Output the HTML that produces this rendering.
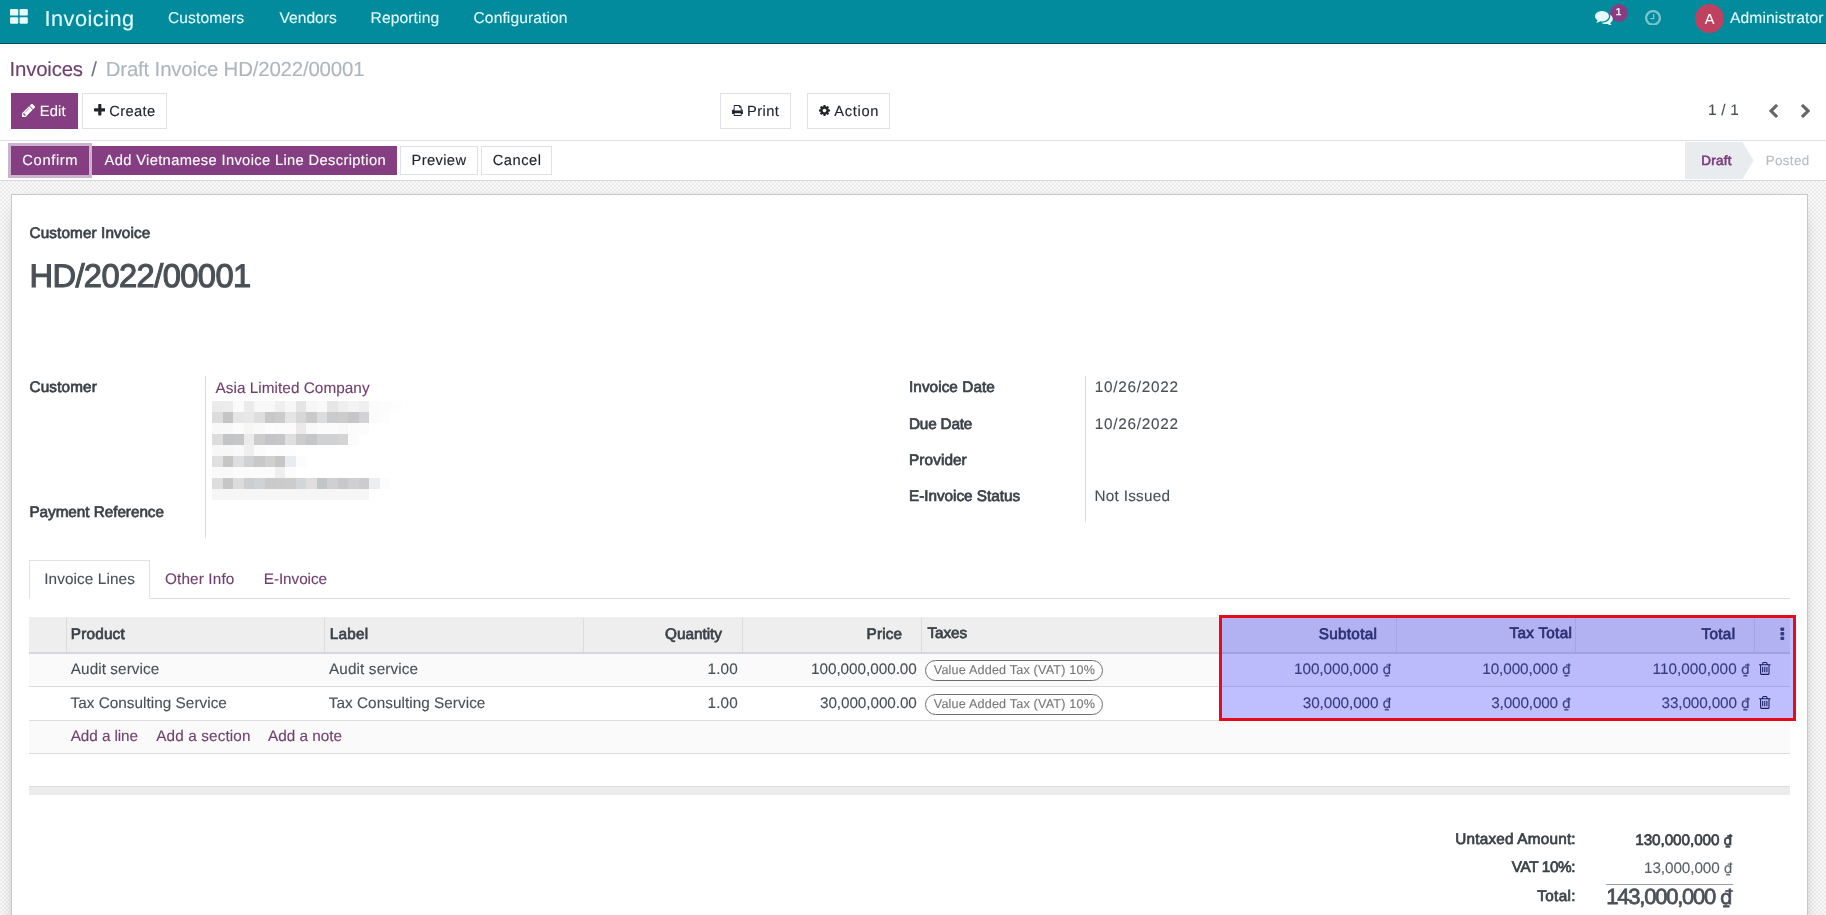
<!DOCTYPE html>
<html lang="en">
<head>
<meta charset="utf-8">
<title>Invoices / Draft Invoice HD/2022/00001</title>
<style>
html,body{margin:0;padding:0;}
body{width:1826px;height:915px;overflow:hidden;background:#fff;font-family:"Liberation Sans",sans-serif;text-rendering:geometricPrecision;}
#page{position:relative;width:1826px;height:915px;overflow:hidden;will-change:transform;}
#page div,#page span,#page svg{position:absolute;box-sizing:border-box;}
.t{white-space:nowrap;}
#page .t .d{position:static;font-family:"DejaVu Sans","Liberation Sans",sans-serif;font-size:0.9em;}
.navbar{left:0;top:0;width:1826px;height:44px;background:#018b9c;border-bottom:1px solid #04505f;}
.hatch{left:0;top:181px;width:1826px;height:734px;background-color:#f8f8f8;
 background-image:linear-gradient(45deg,#ececec 25%,transparent 25%,transparent 75%,#ececec 75%),linear-gradient(45deg,#ececec 25%,transparent 25%,transparent 75%,#ececec 75%);
 background-size:4px 4px;background-position:0 0,2px 2px;}
.sheet{left:11px;top:194px;width:1797px;height:760px;background:#fff;border:1px solid #c8c8cc;box-shadow:0 5px 20px -15px #000;}
.hl{height:1px;background:#dcdcdc;}
.vl{width:1px;background:#dddddd;}
.btn{border:1px solid #dee2e6;background:#fff;}
.btnp{background:#863e83;}
.badge{border:1px solid #6f6f6f;border-radius:11px;background:#fff;}
</style>
</head>
<body>
<div id="page">
<!-- top navigation bar -->
<div class="navbar"></div>
<svg style="left:10px;top:9px" width="18" height="15" viewBox="0 0 18 15"><g fill="#e9fcfd"><rect x="0" y="0" width="8.2" height="6.6" rx="1.2"/><rect x="9.6" y="0" width="8.2" height="6.6" rx="1.2"/><rect x="0" y="8.2" width="8.2" height="6.6" rx="1.2"/><rect x="9.6" y="8.2" width="8.2" height="6.6" rx="1.2"/></g></svg>
<!-- messaging badge -->
<div style="left:1609.5px;top:4px;width:18px;height:18px;border-radius:9px;background:#863e83"></div>
<!-- avatar -->
<div style="left:1695px;top:4px;width:29px;height:29px;border-radius:15px;background:#bf4160"></div>

<!-- control panel -->
<div class="btnp" style="left:11px;top:93px;width:67px;height:36px"></div>
<div class="btn" style="left:82px;top:93px;width:85px;height:36px"></div>
<div class="btn" style="left:720px;top:93px;width:71px;height:36px"></div>
<div class="btn" style="left:807px;top:93px;width:83px;height:36px"></div>
<div class="hl" style="left:0;top:140px;width:1826px;background:#dfdfdf"></div>

<!-- status bar -->
<div style="left:8px;top:143px;width:84px;height:35px;background:#cbb2cd"></div>
<div class="btnp" style="left:11px;top:146px;width:78px;height:29px"></div>
<div class="btnp" style="left:92px;top:146px;width:305px;height:29px"></div>
<div class="btn" style="left:400px;top:146px;width:78px;height:29px"></div>
<div class="btn" style="left:481px;top:146px;width:71px;height:29px"></div>
<svg style="left:1685px;top:142px" width="70" height="37" viewBox="0 0 70 37"><path d="M0 0H57.500L68.600 18.500L57.500 37H0z" fill="#e9ecef"/></svg>
<div class="hl" style="left:0;top:180px;width:1826px;background:#d5d8db"></div>

<!-- form background + sheet -->
<div class="hatch"></div>
<div class="sheet"></div>

<!-- group separators -->
<div class="vl" style="left:205px;top:376px;height:162px"></div>
<div class="vl" style="left:1085px;top:376px;height:146px"></div>

<!-- blurred partner address (pixelated in source) -->
<svg style="left:212px;top:401px" width="190" height="100" viewBox="212 401 190 100" shape-rendering="crispEdges">
<rect x="212.20" y="401.00" width="10.52" height="11.00" fill="#ebebeb"/>
<rect x="222.67" y="401.00" width="10.52" height="11.00" fill="#ececec"/>
<rect x="233.14" y="401.00" width="10.52" height="11.00" fill="#fbfbfb"/>
<rect x="243.61" y="401.00" width="10.52" height="11.00" fill="#ebebeb"/>
<rect x="254.08" y="401.00" width="10.52" height="11.00" fill="#f8f8f8"/>
<rect x="264.55" y="401.00" width="10.52" height="11.00" fill="#f8f8f8"/>
<rect x="275.02" y="401.00" width="10.52" height="11.00" fill="#efefef"/>
<rect x="285.49" y="401.00" width="10.52" height="11.00" fill="#f7f7f7"/>
<rect x="295.96" y="401.00" width="10.52" height="11.00" fill="#e4e4e4"/>
<rect x="306.43" y="401.00" width="10.52" height="11.00" fill="#f6f6f6"/>
<rect x="316.90" y="401.00" width="10.52" height="11.00" fill="#f9f9f9"/>
<rect x="327.37" y="401.00" width="10.52" height="11.00" fill="#e6e6e6"/>
<rect x="337.84" y="401.00" width="10.52" height="11.00" fill="#efefef"/>
<rect x="348.31" y="401.00" width="10.52" height="11.00" fill="#f3f3f3"/>
<rect x="358.78" y="401.00" width="10.52" height="11.00" fill="#efefef"/>
<rect x="369.25" y="401.00" width="10.52" height="11.00" fill="#fbfbfb"/>
<rect x="379.72" y="401.00" width="10.52" height="11.00" fill="#fcfcfc"/>
<rect x="390.19" y="401.00" width="10.52" height="11.00" fill="#fdfdfd"/>
<rect x="212.20" y="411.95" width="10.52" height="11.00" fill="#dcdcdc"/>
<rect x="222.67" y="411.95" width="10.52" height="11.00" fill="#c4c4c4"/>
<rect x="233.14" y="411.95" width="10.52" height="11.00" fill="#e6e6e6"/>
<rect x="243.61" y="411.95" width="10.52" height="11.00" fill="#e8e8e8"/>
<rect x="254.08" y="411.95" width="10.52" height="11.00" fill="#dedede"/>
<rect x="264.55" y="411.95" width="10.52" height="11.00" fill="#c8c8c8"/>
<rect x="275.02" y="411.95" width="10.52" height="11.00" fill="#cbcbcb"/>
<rect x="285.49" y="411.95" width="10.52" height="11.00" fill="#e4e4e4"/>
<rect x="295.96" y="411.95" width="10.52" height="11.00" fill="#d6d8d8"/>
<rect x="306.43" y="411.95" width="10.52" height="11.00" fill="#cacaca"/>
<rect x="316.90" y="411.95" width="10.52" height="11.00" fill="#dadcde"/>
<rect x="327.37" y="411.95" width="10.52" height="11.00" fill="#cacaca"/>
<rect x="337.84" y="411.95" width="10.52" height="11.00" fill="#cccccc"/>
<rect x="348.31" y="411.95" width="10.52" height="11.00" fill="#c6c6c8"/>
<rect x="358.78" y="411.95" width="10.52" height="11.00" fill="#d2d2d4"/>
<rect x="369.25" y="411.95" width="10.52" height="11.00" fill="#fbfbfb"/>
<rect x="379.72" y="411.95" width="10.52" height="11.00" fill="#fdfdfd"/>
<rect x="212.20" y="422.90" width="10.52" height="11.00" fill="#f8f8f8"/>
<rect x="222.67" y="422.90" width="10.52" height="11.00" fill="#f8f8f8"/>
<rect x="233.14" y="422.90" width="10.52" height="11.00" fill="#fcfcfc"/>
<rect x="243.61" y="422.90" width="10.52" height="11.00" fill="#f6f6f4"/>
<rect x="254.08" y="422.90" width="10.52" height="11.00" fill="#f9f9f9"/>
<rect x="264.55" y="422.90" width="10.52" height="11.00" fill="#fdfdfd"/>
<rect x="275.02" y="422.90" width="10.52" height="11.00" fill="#fbfbfb"/>
<rect x="285.49" y="422.90" width="10.52" height="11.00" fill="#fbfbfb"/>
<rect x="295.96" y="422.90" width="10.52" height="11.00" fill="#ebe9e9"/>
<rect x="306.43" y="422.90" width="10.52" height="11.00" fill="#f9f9f9"/>
<rect x="316.90" y="422.90" width="10.52" height="11.00" fill="#fbfbfb"/>
<rect x="327.37" y="422.90" width="10.52" height="11.00" fill="#fbfbfb"/>
<rect x="337.84" y="422.90" width="10.52" height="11.00" fill="#f9f9f9"/>
<rect x="348.31" y="422.90" width="10.52" height="11.00" fill="#fcfcfc"/>
<rect x="358.78" y="422.90" width="10.52" height="11.00" fill="#fcfcfc"/>
<rect x="212.20" y="433.85" width="10.52" height="11.00" fill="#dcdcdc"/>
<rect x="222.67" y="433.85" width="10.52" height="11.00" fill="#c2c4c6"/>
<rect x="233.14" y="433.85" width="10.52" height="11.00" fill="#c4c6c8"/>
<rect x="243.61" y="433.85" width="10.52" height="11.00" fill="#ebebeb"/>
<rect x="254.08" y="433.85" width="10.52" height="11.00" fill="#cccccc"/>
<rect x="264.55" y="433.85" width="10.52" height="11.00" fill="#c4c4c8"/>
<rect x="275.02" y="433.85" width="10.52" height="11.00" fill="#c6c6c8"/>
<rect x="285.49" y="433.85" width="10.52" height="11.00" fill="#dee0e0"/>
<rect x="295.96" y="433.85" width="10.52" height="11.00" fill="#cccccc"/>
<rect x="306.43" y="433.85" width="10.52" height="11.00" fill="#c4c6c8"/>
<rect x="316.90" y="433.85" width="10.52" height="11.00" fill="#cfd1d3"/>
<rect x="327.37" y="433.85" width="10.52" height="11.00" fill="#cfd1d3"/>
<rect x="337.84" y="433.85" width="10.52" height="11.00" fill="#d4d4d4"/>
<rect x="348.31" y="433.85" width="10.52" height="11.00" fill="#fcfcfc"/>
<rect x="212.20" y="444.80" width="10.52" height="11.00" fill="#f7f7f7"/>
<rect x="222.67" y="444.80" width="10.52" height="11.00" fill="#f7f7f7"/>
<rect x="233.14" y="444.80" width="10.52" height="11.00" fill="#f9f9f9"/>
<rect x="243.61" y="444.80" width="10.52" height="11.00" fill="#efefef"/>
<rect x="254.08" y="444.80" width="10.52" height="11.00" fill="#fbfbfb"/>
<rect x="264.55" y="444.80" width="10.52" height="11.00" fill="#fdfdfd"/>
<rect x="275.02" y="444.80" width="10.52" height="11.00" fill="#fcfcfc"/>
<rect x="285.49" y="444.80" width="10.52" height="11.00" fill="#fdfdfd"/>
<rect x="212.20" y="455.75" width="10.52" height="11.00" fill="#e0e0e0"/>
<rect x="222.67" y="455.75" width="10.52" height="11.00" fill="#c6c6c4"/>
<rect x="233.14" y="455.75" width="10.52" height="11.00" fill="#dcdee0"/>
<rect x="243.61" y="455.75" width="10.52" height="11.00" fill="#cfd1d3"/>
<rect x="254.08" y="455.75" width="10.52" height="11.00" fill="#c8c8c8"/>
<rect x="264.55" y="455.75" width="10.52" height="11.00" fill="#d0d0d0"/>
<rect x="275.02" y="455.75" width="10.52" height="11.00" fill="#c6c6c6"/>
<rect x="285.49" y="455.75" width="10.52" height="11.00" fill="#e8ecf0"/>
<rect x="295.96" y="455.75" width="10.52" height="11.00" fill="#fcfcfc"/>
<rect x="212.20" y="466.70" width="10.52" height="11.00" fill="#f9f9f9"/>
<rect x="222.67" y="466.70" width="10.52" height="11.00" fill="#f9f9f9"/>
<rect x="233.14" y="466.70" width="10.52" height="11.00" fill="#fbfbfb"/>
<rect x="243.61" y="466.70" width="10.52" height="11.00" fill="#fbfbfb"/>
<rect x="254.08" y="466.70" width="10.52" height="11.00" fill="#fbfbfb"/>
<rect x="264.55" y="466.70" width="10.52" height="11.00" fill="#fbfbfb"/>
<rect x="275.02" y="466.70" width="10.52" height="11.00" fill="#efefef"/>
<rect x="285.49" y="466.70" width="10.52" height="11.00" fill="#fcfcfc"/>
<rect x="212.20" y="477.65" width="10.52" height="11.00" fill="#dedede"/>
<rect x="222.67" y="477.65" width="10.52" height="11.00" fill="#c6c6c6"/>
<rect x="233.14" y="477.65" width="10.52" height="11.00" fill="#dcdcdc"/>
<rect x="243.61" y="477.65" width="10.52" height="11.00" fill="#cccfd1"/>
<rect x="254.08" y="477.65" width="10.52" height="11.00" fill="#d0d3d5"/>
<rect x="264.55" y="477.65" width="10.52" height="11.00" fill="#cacaca"/>
<rect x="275.02" y="477.65" width="10.52" height="11.00" fill="#cbcbcb"/>
<rect x="285.49" y="477.65" width="10.52" height="11.00" fill="#cccccc"/>
<rect x="295.96" y="477.65" width="10.52" height="11.00" fill="#d3d6d8"/>
<rect x="306.43" y="477.65" width="10.52" height="11.00" fill="#dedede"/>
<rect x="316.90" y="477.65" width="10.52" height="11.00" fill="#c2c6c6"/>
<rect x="327.37" y="477.65" width="10.52" height="11.00" fill="#d0d0d0"/>
<rect x="337.84" y="477.65" width="10.52" height="11.00" fill="#c8c8ca"/>
<rect x="348.31" y="477.65" width="10.52" height="11.00" fill="#d0d0d2"/>
<rect x="358.78" y="477.65" width="10.52" height="11.00" fill="#cccccc"/>
<rect x="369.25" y="477.65" width="10.52" height="11.00" fill="#eceef0"/>
<rect x="379.72" y="477.65" width="10.52" height="11.00" fill="#fcfcfc"/>
<rect x="212.20" y="488.60" width="10.52" height="11.00" fill="#f6f6f6"/>
<rect x="222.67" y="488.60" width="10.52" height="11.00" fill="#f6f6f6"/>
<rect x="233.14" y="488.60" width="10.52" height="11.00" fill="#f6f6f6"/>
<rect x="243.61" y="488.60" width="10.52" height="11.00" fill="#f6f6f6"/>
<rect x="254.08" y="488.60" width="10.52" height="11.00" fill="#f6f6f6"/>
<rect x="264.55" y="488.60" width="10.52" height="11.00" fill="#f6f6f6"/>
<rect x="275.02" y="488.60" width="10.52" height="11.00" fill="#f6f6f6"/>
<rect x="285.49" y="488.60" width="10.52" height="11.00" fill="#f6f6f6"/>
<rect x="295.96" y="488.60" width="10.52" height="11.00" fill="#f6f6f6"/>
<rect x="306.43" y="488.60" width="10.52" height="11.00" fill="#f6f6f6"/>
<rect x="316.90" y="488.60" width="10.52" height="11.00" fill="#f6f6f6"/>
<rect x="327.37" y="488.60" width="10.52" height="11.00" fill="#f6f6f6"/>
<rect x="337.84" y="488.60" width="10.52" height="11.00" fill="#f6f6f6"/>
<rect x="348.31" y="488.60" width="10.52" height="11.00" fill="#f6f6f6"/>
<rect x="358.78" y="488.60" width="10.52" height="11.00" fill="#f6f6f6"/>
</svg>

<!-- notebook tabs -->
<div class="hl" style="left:29px;top:598px;width:1761px"></div>
<div style="left:29px;top:560px;width:121px;height:39px;background:#fff;border:1px solid #dee2e6;border-bottom:1px solid #fff"></div>

<!-- list table -->
<div style="left:29px;top:617px;width:1761px;height:37px;background:#eeeeee;border-bottom:2px solid #d5d7da"></div>
<div class="vl" style="left:66px;top:618px;height:34px;background:#dcdcdc"></div>
<div class="vl" style="left:324px;top:618px;height:34px;background:#dcdcdc"></div>
<div class="vl" style="left:583px;top:618px;height:34px;background:#dcdcdc"></div>
<div class="vl" style="left:742px;top:618px;height:34px;background:#dcdcdc"></div>
<div class="vl" style="left:921px;top:618px;height:34px;background:#dcdcdc"></div>
<div class="vl" style="left:1396px;top:618px;height:34px;background:#dcdcdc"></div>
<div class="vl" style="left:1575px;top:618px;height:34px;background:#dcdcdc"></div>
<div class="vl" style="left:1754px;top:618px;height:34px;background:#dcdcdc"></div>
<div style="left:29px;top:654px;width:1761px;height:32px;background:#fafafa"></div>
<div class="hl" style="left:29px;top:686px;width:1761px"></div>
<div class="hl" style="left:29px;top:720px;width:1761px"></div>
<div style="left:29px;top:721px;width:1761px;height:32px;background:#fafafa"></div>
<div class="hl" style="left:29px;top:753px;width:1761px"></div>
<div class="badge" style="left:925px;top:660px;width:178px;height:21px"></div>
<div class="badge" style="left:925px;top:694px;width:178px;height:21px"></div>
<div style="left:29px;top:786px;width:1761px;height:9px;background:#ececec;border-top:1px solid #dedede"></div>

<!-- totals rule -->
<div class="hl" style="left:1606px;top:884px;width:127px;background:#9a9fa5"></div>
<!-- icons -->
<svg style="left:1595.00px;top:10.60px" width="17.80" height="14.40" viewBox="0 256 1792 1408" preserveAspectRatio="none"><path fill="#e6fbfd" d="M1408 768q0 139-94 257t-256.500 186.500-353.500 68.500q-86 0-176-16-124 88-278 128-36 9-86 16h-3q-11 0-20.500-8t-11.500-21q-1-3-1-6.500t.5-6.500 2-6l2.500-5 3.500-5.500 4-5 4.500-5 4-4.500q5-6 23-25t26-29.500 22.500-29 25-38.500 20.500-44q-124-72-195-177t-71-224q0-139 94-257t256.500-186.500 353.500-68.500 353.500 68.500 256.500 186.500 94 257zm384 256q0 120-71 224.500t-195 176.500q10 24 20.500 44t25 38.500 22.500 29 26 29.500 23 25q1 1 4 4.500t4.500 5 4 5 3.500 5.500l2.500 5 2 6 .5 6.500-1 6.500q-3 14-13 22t-22 7q-50-7-86-16-154-40-278-128-90 16-176 16-271 0-472-132 58 4 88 4 161 0 309-45t264-129q125-92 192-212t67-254q0-77-23-152 129 71 204 178t75 230z"/></svg>
<svg style="left:1644.70px;top:9.60px" width="16.00" height="15.80" viewBox="128 128 1536 1536" preserveAspectRatio="none"><path fill="#7dc5ce" d="M1024 544v448q0 14-9 23t-23 9h-320q-14 0-23-9t-9-23v-64q0-14 9-23t23-9h224v-352q0-14 9-23t23-9h64q14 0 23 9t9 23zm416 352q0-148-73-273t-198-198-273-73-273 73-198 198-73 273 73 273 198 198 273 73 273-73 198-198 73-273zm224 0q0 209-103 385.500t-279.500 279.500-385.500 103-385.500-103-279.500-279.500-103-385.500 103-385.500 279.500-279.500 385.500-103 385.500 103 279.500 279.500 103 385.500z"/></svg>
<svg style="left:22.30px;top:104.30px" width="13.00" height="12.90" viewBox="128 150 1514 1514" preserveAspectRatio="none"><path fill="#ffffff" d="M491 1536l91-91-235-235-91 91v107h128v128h107zm523-928q0-22-22-22-10 0-17 7l-542 542q-7 7-7 17 0 22 22 22 10 0 17-7l542-542q7-7 7-17zm-54-192l416 416-832 832h-416v-416zm683 96q0 53-37 90l-166 166-416-416 166-165q36-38 90-38 53 0 91 38l235 234q37 39 37 91z"/></svg>
<svg style="left:93.90px;top:104.20px" width="11.60" height="11.60" viewBox="192 128 1408 1408" preserveAspectRatio="none"><path fill="#212529" d="M1600 736v192q0 40-28 68t-68 28h-416v416q0 40-28 68t-68 28h-192q-40 0-68-28t-28-68v-416h-416q-40 0-68-28t-28-68v-192q0-40 28-68t68-28h416v-416q0-40 28-68t68-28h192q40 0 68 28t28 68v416h416q40 0 68 28t28 68z"/></svg>
<svg style="left:731.70px;top:105.00px" width="11.40" height="10.90" viewBox="64 128 1664 1536" preserveAspectRatio="none"><path fill="#212529" d="M448 1536h896v-256h-896v256zm0-640h896v-384h-160q-40 0-68-28t-28-68v-160h-640v640zm1152 64q0-26-19-45t-45-19-45 19-19 45 19 45 45 19 45-19 19-45zm128 0v416q0 13-9.5 22.500t-22.500 9.500h-224v160q0 40-28 68t-68 28h-960q-40 0-68-28t-28-68v-160h-224q-13 0-22.500-9.500t-9.500-22.500v-416q0-79 56.500-135.500t135.500-56.500h64v-544q0-40 28-68t68-28h672q40 0 88 20t76 48l152 152q28 28 48 76t20 88v256h64q79 0 135.500 56.500t56.500 135.500z"/></svg>
<svg style="left:819.00px;top:105.30px" width="11.00" height="10.90" viewBox="128 128 1536 1536" preserveAspectRatio="none"><path fill="#212529" d="M1152 896q0-106-75-181t-181-75-181 75-75 181 75 181 181 75 181-75 75-181zm512-109v222q0 12-8 23t-20 13l-185 28q-19 54-39 91 35 50 107 138 10 12 10 25t-9 23q-27 37-99 108t-94 71q-12 0-26-9l-138-108q-44 23-91 38-16 136-29 186-7 28-36 28h-222q-14 0-24.500-8.500t-11.500-21.500l-28-184q-49-16-90-37l-141 107q-10 9-25 9-14 0-25-11-126-114-165-168-7-10-7-23 0-12 8-23 15-21 51-66.500t54-70.500q-27-50-41-99l-183-27q-13-2-21-12.500t-8-23.500v-222q0-12 8-23t19-13l186-28q14-46 39-92-40-57-107-138-10-12-10-24 0-10 9-23 26-36 98.500-107.500t94.500-71.500q13 0 26 10l138 107q44-23 91-38 16-136 29-186 7-28 36-28h222q14 0 24.500 8.500t11.500 21.500l28 184q49 16 90 37l142-107q9-9 24-9 13 0 25 10 129 119 165 170 7 8 7 22 0 12-8 23-15 21-51 66.500t-54 70.500q26 50 41 98l183 28q13 2 21 12.500t8 23.500z"/></svg>
<svg style="left:1768.80px;top:103.90px" width="9.00" height="13.80" viewBox="410 26 1036 1612" preserveAspectRatio="none"><path fill="#666666" d="M1427 301l-531 531 531 531q19 19 19 45t-19 45l-166 166q-19 19-45 19t-45-19l-742-742q-19-19-19-45t19-45l742-742q19-19 45-19t45 19l166 166q19 19 19 45t-19 45z"/></svg>
<svg style="left:1801.00px;top:103.90px" width="9.20" height="13.80" viewBox="346 26 1036 1612" preserveAspectRatio="none"><path fill="#666666" d="M1363 877l-742 742q-19 19-45 19t-45-19l-166-166q-19-19-19-45t19-45l531-531-531-531q-19-19-19-45t19-45l166-166q19-19 45-19t45 19l742 742q19 19 19 45t-19 45z"/></svg>
<svg style="left:1759.00px;top:662.00px" width="11.60" height="12.90" viewBox="192 128 1408 1536" preserveAspectRatio="none"><path fill="#212529" d="M704 736v576q0 14-9 23t-23 9h-64q-14 0-23-9t-9-23v-576q0-14 9-23t23-9h64q14 0 23 9t9 23zm256 0v576q0 14-9 23t-23 9h-64q-14 0-23-9t-9-23v-576q0-14 9-23t23-9h64q14 0 23 9t9 23zm256 0v576q0 14-9 23t-23 9h-64q-14 0-23-9t-9-23v-576q0-14 9-23t23-9h64q14 0 23 9t9 23zm128 724v-948h-896v948q0 22 7 40.500t14.500 27 10.500 8.500h832q3 0 10.500-8.500t14.500-27 7-40.500zm-672-1076h448l-48-117q-7-9-17-11h-317q-10 2-17 11zm928 32v64q0 14-9 23t-23 9h-96v948q0 83-47 143.500t-113 60.500h-832q-66 0-113-58.500t-47-141.500v-952h-96q-14 0-23-9t-9-23v-64q0-14 9-23t23-9h309l70-167q15-37 54-63t79-26h320q40 0 79 26t54 63l70 167h309q14 0 23 9t9 23z"/></svg>
<svg style="left:1759.00px;top:696.00px" width="11.60" height="12.90" viewBox="192 128 1408 1536" preserveAspectRatio="none"><path fill="#212529" d="M704 736v576q0 14-9 23t-23 9h-64q-14 0-23-9t-9-23v-576q0-14 9-23t23-9h64q14 0 23 9t9 23zm256 0v576q0 14-9 23t-23 9h-64q-14 0-23-9t-9-23v-576q0-14 9-23t23-9h64q14 0 23 9t9 23zm256 0v576q0 14-9 23t-23 9h-64q-14 0-23-9t-9-23v-576q0-14 9-23t23-9h64q14 0 23 9t9 23zm128 724v-948h-896v948q0 22 7 40.500t14.500 27 10.500 8.500h832q3 0 10.500-8.500t14.500-27 7-40.500zm-672-1076h448l-48-117q-7-9-17-11h-317q-10 2-17 11zm928 32v64q0 14-9 23t-23 9h-96v948q0 83-47 143.500t-113 60.500h-832q-66 0-113-58.500t-47-141.500v-952h-96q-14 0-23-9t-9-23v-64q0-14 9-23t23-9h309l70-167q15-37 54-63t79-26h320q40 0 79 26t54 63l70 167h309q14 0 23 9t9 23z"/></svg>
<svg style="left:1780px;top:627px" width="5" height="14" viewBox="0 0 5 14"><g fill="#495057"><rect x="0.4" y="0.5" width="3.8" height="3.4" rx="0.8"/><rect x="0.4" y="5.1" width="3.8" height="3.4" rx="0.8"/><rect x="0.4" y="9.7" width="3.8" height="3.4" rx="0.8"/></g></svg>

<!-- text -->
<span class="t" style="left:44.50px;top:6.08px;font-size:21.7px;line-height:26px;color:#e4fbfd;-webkit-text-stroke:0.12px #e4fbfd;letter-spacing:0.500px;">Invoicing</span>
<span class="t" style="left:168.00px;top:9.09px;font-size:15.6px;line-height:19px;color:#e4fbfd;-webkit-text-stroke:0.12px #e4fbfd;letter-spacing:0.094px;">Customers</span>
<span class="t" style="left:279.50px;top:9.09px;font-size:15.6px;line-height:19px;color:#e4fbfd;-webkit-text-stroke:0.12px #e4fbfd;">Vendors</span>
<span class="t" style="left:370.50px;top:9.09px;font-size:15.6px;line-height:19px;color:#e4fbfd;-webkit-text-stroke:0.12px #e4fbfd;letter-spacing:0.125px;">Reporting</span>
<span class="t" style="left:473.50px;top:9.09px;font-size:15.6px;line-height:19px;color:#e4fbfd;-webkit-text-stroke:0.12px #e4fbfd;letter-spacing:0.104px;">Configuration</span>
<span class="t" style="left:1730.00px;top:9.19px;font-size:15.6px;line-height:19px;color:#e4fbfd;-webkit-text-stroke:0.12px #e4fbfd;letter-spacing:0.133px;">Administrator</span>
<span class="t" style="left:1704.65px;top:12.08px;font-size:14.5px;line-height:17px;color:#ffffff;-webkit-text-stroke:0.12px #ffffff;">A</span>
<span class="t" style="left:1615.70px;top:6.73px;font-size:10px;line-height:12px;color:#f3e6f3;-webkit-text-stroke:0.46px #f3e6f3;">1</span>
<span class="t" style="left:9.50px;top:57.53px;font-size:20.4px;line-height:24px;color:#6d3f6c;-webkit-text-stroke:0.12px #6d3f6c;letter-spacing:-0.179px;">Invoices</span>
<span class="t" style="left:91.25px;top:57.53px;font-size:20.4px;line-height:24px;color:#6c757d;-webkit-text-stroke:0.12px #6c757d;">/</span>
<span class="t" style="left:105.75px;top:57.53px;font-size:20.4px;line-height:24px;color:#adb5bd;-webkit-text-stroke:0.12px #adb5bd;letter-spacing:-0.163px;">Draft Invoice HD/2022/00001</span>
<span class="t" style="left:39.70px;top:102.91px;font-size:14.7px;line-height:18px;color:#ffffff;-webkit-text-stroke:0.12px #ffffff;letter-spacing:0.200px;">Edit</span>
<span class="t" style="left:109.25px;top:102.91px;font-size:14.7px;line-height:18px;color:#212529;-webkit-text-stroke:0.12px #212529;letter-spacing:0.370px;">Create</span>
<span class="t" style="left:746.90px;top:102.91px;font-size:14.7px;line-height:18px;color:#212529;-webkit-text-stroke:0.12px #212529;letter-spacing:0.438px;">Print</span>
<span class="t" style="left:834.15px;top:102.91px;font-size:14.7px;line-height:18px;color:#212529;-webkit-text-stroke:0.12px #212529;letter-spacing:0.690px;">Action</span>
<span class="t" style="left:1708.00px;top:101.70px;font-size:15.3px;line-height:18px;color:#495057;-webkit-text-stroke:0.12px #495057;letter-spacing:0.250px;">1 / 1</span>
<span class="t" style="left:22.35px;top:151.71px;font-size:14.7px;line-height:18px;color:#ffffff;-webkit-text-stroke:0.12px #ffffff;letter-spacing:0.633px;">Confirm</span>
<span class="t" style="left:104.50px;top:151.71px;font-size:14.7px;line-height:18px;color:#ffffff;-webkit-text-stroke:0.12px #ffffff;letter-spacing:0.357px;">Add Vietnamese Invoice Line Description</span>
<span class="t" style="left:411.50px;top:151.71px;font-size:14.7px;line-height:18px;color:#212529;-webkit-text-stroke:0.12px #212529;letter-spacing:0.375px;">Preview</span>
<span class="t" style="left:492.75px;top:151.71px;font-size:14.7px;line-height:18px;color:#212529;-webkit-text-stroke:0.12px #212529;letter-spacing:0.500px;">Cancel</span>
<span class="t" style="left:1701.25px;top:153.11px;font-size:13.4px;line-height:16px;color:#7c3a7a;-webkit-text-stroke:0.61px #7c3a7a;letter-spacing:0.312px;">Draft</span>
<span class="t" style="left:1765.75px;top:153.11px;font-size:13.4px;line-height:16px;color:#b4bbc2;-webkit-text-stroke:0.12px #b4bbc2;letter-spacing:0.340px;">Posted</span>
<span class="t" style="left:29.50px;top:224.70px;font-size:15.3px;line-height:18px;color:#3b4148;-webkit-text-stroke:0.70px #3b4148;letter-spacing:0.117px;">Customer Invoice</span>
<span class="t" style="left:29.40px;top:256.17px;font-size:32.7px;line-height:39px;color:#495057;-webkit-text-stroke:1.10px #495057;letter-spacing:-0.604px;">HD/2022/00001</span>
<span class="t" style="left:29.50px;top:378.70px;font-size:15.3px;line-height:18px;color:#3b4148;-webkit-text-stroke:0.70px #3b4148;letter-spacing:0.143px;">Customer</span>
<span class="t" style="left:215.50px;top:379.70px;font-size:15.3px;line-height:18px;color:#71406e;-webkit-text-stroke:0.12px #71406e;letter-spacing:0.053px;">Asia Limited Company</span>
<span class="t" style="left:29.40px;top:503.70px;font-size:15.3px;line-height:18px;color:#3b4148;-webkit-text-stroke:0.70px #3b4148;letter-spacing:-0.038px;">Payment Reference</span>
<span class="t" style="left:909.00px;top:378.70px;font-size:15.3px;line-height:18px;color:#3b4148;-webkit-text-stroke:0.70px #3b4148;letter-spacing:0.068px;">Invoice Date</span>
<span class="t" style="left:909.00px;top:415.70px;font-size:15.3px;line-height:18px;color:#3b4148;-webkit-text-stroke:0.70px #3b4148;letter-spacing:-0.179px;">Due Date</span>
<span class="t" style="left:909.00px;top:451.70px;font-size:15.3px;line-height:18px;color:#3b4148;-webkit-text-stroke:0.70px #3b4148;letter-spacing:0.107px;">Provider</span>
<span class="t" style="left:909.00px;top:487.70px;font-size:15.3px;line-height:18px;color:#3b4148;-webkit-text-stroke:0.70px #3b4148;letter-spacing:-0.017px;">E-Invoice Status</span>
<span class="t" style="left:1094.75px;top:378.70px;font-size:15.3px;line-height:18px;color:#495057;-webkit-text-stroke:0.12px #495057;letter-spacing:0.750px;">10/26/2022</span>
<span class="t" style="left:1094.75px;top:415.95px;font-size:15.3px;line-height:18px;color:#495057;-webkit-text-stroke:0.12px #495057;letter-spacing:0.750px;">10/26/2022</span>
<span class="t" style="left:1094.50px;top:487.95px;font-size:15.3px;line-height:18px;color:#495057;-webkit-text-stroke:0.12px #495057;letter-spacing:0.278px;">Not Issued</span>
<span class="t" style="left:44.25px;top:570.95px;font-size:15.3px;line-height:18px;color:#495057;-webkit-text-stroke:0.12px #495057;letter-spacing:0.104px;">Invoice Lines</span>
<span class="t" style="left:165.00px;top:570.95px;font-size:15.3px;line-height:18px;color:#71406e;-webkit-text-stroke:0.12px #71406e;letter-spacing:0.139px;">Other Info</span>
<span class="t" style="left:263.75px;top:570.95px;font-size:15.3px;line-height:18px;color:#71406e;-webkit-text-stroke:0.12px #71406e;letter-spacing:-0.062px;">E-Invoice</span>
<span class="t" style="left:70.75px;top:625.95px;font-size:15.3px;line-height:18px;color:#3b4148;-webkit-text-stroke:0.70px #3b4148;letter-spacing:0.208px;">Product</span>
<span class="t" style="left:329.75px;top:625.95px;font-size:15.3px;line-height:18px;color:#3b4148;-webkit-text-stroke:0.70px #3b4148;letter-spacing:0.250px;">Label</span>
<span class="t" style="left:665.00px;top:625.95px;font-size:15.3px;line-height:18px;color:#3b4148;-webkit-text-stroke:0.70px #3b4148;">Quantity</span>
<span class="t" style="left:866.50px;top:625.95px;font-size:15.3px;line-height:18px;color:#3b4148;-webkit-text-stroke:0.70px #3b4148;letter-spacing:0.188px;">Price</span>
<span class="t" style="left:927.50px;top:624.70px;font-size:15.3px;line-height:18px;color:#3b4148;-webkit-text-stroke:0.70px #3b4148;letter-spacing:-0.062px;">Taxes</span>
<span class="t" style="left:1318.75px;top:625.95px;font-size:15.3px;line-height:18px;color:#3b4148;-webkit-text-stroke:0.70px #3b4148;letter-spacing:0.286px;">Subtotal</span>
<span class="t" style="left:1509.50px;top:624.70px;font-size:15.3px;line-height:18px;color:#3b4148;-webkit-text-stroke:0.70px #3b4148;letter-spacing:0.281px;">Tax Total</span>
<span class="t" style="left:1701.45px;top:625.95px;font-size:15.3px;line-height:18px;color:#3b4148;-webkit-text-stroke:0.70px #3b4148;letter-spacing:0.338px;">Total</span>
<span class="t" style="left:70.75px;top:660.95px;font-size:15.3px;line-height:18px;color:#495057;-webkit-text-stroke:0.12px #495057;letter-spacing:0.083px;">Audit service</span>
<span class="t" style="left:329.00px;top:660.95px;font-size:15.3px;line-height:18px;color:#495057;-webkit-text-stroke:0.12px #495057;letter-spacing:0.125px;">Audit service</span>
<span class="t" style="left:707.50px;top:660.95px;font-size:15.3px;line-height:18px;color:#495057;-webkit-text-stroke:0.12px #495057;letter-spacing:0.167px;">1.00</span>
<span class="t" style="left:811.00px;top:660.95px;font-size:15.3px;line-height:18px;color:#495057;-webkit-text-stroke:0.12px #495057;letter-spacing:-0.038px;">100,000,000.00</span>
<span class="t" style="left:933.75px;top:663.38px;font-size:12.6px;line-height:15px;color:#777777;-webkit-text-stroke:0.12px #777777;letter-spacing:0.188px;">Value Added Tax (VAT) 10%</span>
<span class="t" style="left:1294.00px;top:660.95px;font-size:15.3px;line-height:18px;color:#495057;-webkit-text-stroke:0.12px #495057;letter-spacing:-0.062px;">100,000,000 <span class="d">₫</span></span>
<span class="t" style="left:1482.25px;top:660.95px;font-size:15.3px;line-height:18px;color:#495057;-webkit-text-stroke:0.12px #495057;letter-spacing:-0.091px;">10,000,000 <span class="d">₫</span></span>
<span class="t" style="left:1652.50px;top:660.95px;font-size:15.3px;line-height:18px;color:#495057;-webkit-text-stroke:0.12px #495057;letter-spacing:0.021px;">110,000,000 <span class="d">₫</span></span>
<span class="t" style="left:70.50px;top:694.70px;font-size:15.3px;line-height:18px;color:#495057;-webkit-text-stroke:0.12px #495057;letter-spacing:0.036px;">Tax Consulting Service</span>
<span class="t" style="left:328.75px;top:694.70px;font-size:15.3px;line-height:18px;color:#495057;-webkit-text-stroke:0.12px #495057;letter-spacing:0.048px;">Tax Consulting Service</span>
<span class="t" style="left:707.50px;top:694.70px;font-size:15.3px;line-height:18px;color:#495057;-webkit-text-stroke:0.12px #495057;letter-spacing:0.167px;">1.00</span>
<span class="t" style="left:820.00px;top:694.70px;font-size:15.3px;line-height:18px;color:#495057;-webkit-text-stroke:0.12px #495057;letter-spacing:-0.083px;">30,000,000.00</span>
<span class="t" style="left:933.75px;top:697.38px;font-size:12.6px;line-height:15px;color:#777777;-webkit-text-stroke:0.12px #777777;letter-spacing:0.188px;">Value Added Tax (VAT) 10%</span>
<span class="t" style="left:1302.75px;top:694.70px;font-size:15.3px;line-height:18px;color:#495057;-webkit-text-stroke:0.12px #495057;letter-spacing:-0.091px;">30,000,000 <span class="d">₫</span></span>
<span class="t" style="left:1491.25px;top:694.70px;font-size:15.3px;line-height:18px;color:#495057;-webkit-text-stroke:0.12px #495057;letter-spacing:-0.150px;">3,000,000 <span class="d">₫</span></span>
<span class="t" style="left:1661.55px;top:694.70px;font-size:15.3px;line-height:18px;color:#495057;-webkit-text-stroke:0.12px #495057;letter-spacing:-0.123px;">33,000,000 <span class="d">₫</span></span>
<span class="t" style="left:70.75px;top:727.95px;font-size:15.3px;line-height:18px;color:#71406e;-webkit-text-stroke:0.12px #71406e;letter-spacing:-0.083px;">Add a line</span>
<span class="t" style="left:156.25px;top:727.95px;font-size:15.3px;line-height:18px;color:#71406e;-webkit-text-stroke:0.12px #71406e;letter-spacing:0.125px;">Add a section</span>
<span class="t" style="left:268.00px;top:727.95px;font-size:15.3px;line-height:18px;color:#71406e;-webkit-text-stroke:0.12px #71406e;">Add a note</span>
<span class="t" style="left:1455.25px;top:830.60px;font-size:15.3px;line-height:18px;color:#3b4148;-webkit-text-stroke:0.70px #3b4148;letter-spacing:0.214px;">Untaxed Amount:</span>
<span class="t" style="left:1635.25px;top:831.50px;font-size:15.3px;line-height:18px;color:#3b4148;-webkit-text-stroke:0.70px #3b4148;letter-spacing:-0.083px;">130,000,000 <span class="d">₫</span></span>
<span class="t" style="left:1511.75px;top:859.30px;font-size:15.3px;line-height:18px;color:#3b4148;-webkit-text-stroke:0.70px #3b4148;letter-spacing:-0.357px;">VAT 10%:</span>
<span class="t" style="left:1644.00px;top:859.70px;font-size:15.3px;line-height:18px;color:#5a6168;-webkit-text-stroke:0.12px #5a6168;letter-spacing:-0.091px;">13,000,000 <span class="d">₫</span></span>
<span class="t" style="left:1537.30px;top:887.50px;font-size:15.3px;line-height:18px;color:#3b4148;-webkit-text-stroke:0.70px #3b4148;letter-spacing:0.330px;">Total:</span>
<span class="t" style="left:1606.30px;top:883.68px;font-size:22px;line-height:26px;color:#495057;-webkit-text-stroke:0.75px #495057;letter-spacing:-1.238px;">143,000,000 <span class="d">₫</span></span>
<!-- highlight annotation -->
<div style="left:1219px;top:615px;width:577px;height:106px;border:3px solid #e60a1a;background:rgba(0,0,255,0.25)"></div>
</div>
</body>
</html>
